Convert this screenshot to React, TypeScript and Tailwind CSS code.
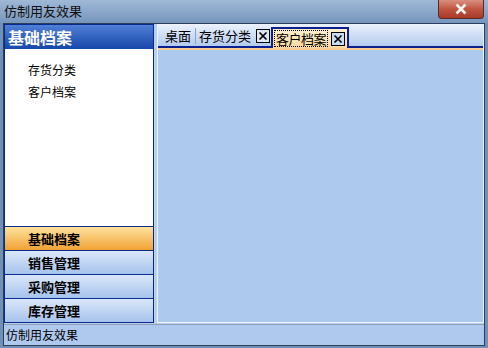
import React from "react";

const font = { fontFamily: '"Noto Sans CJK SC", "Liberation Sans", sans-serif' };

function CloseBox({ active }: { active?: boolean }) {
  return (
    <div className={`w-[14px] h-[14px] border border-black flex items-center justify-center ${active ? "bg-[#c9dcf5]" : "bg-[#dde8f7]"}`}>
      <svg width="10" height="10" viewBox="0 0 10 10">
        <path d="M1.5 1.5 L8.5 8.5 M8.5 1.5 L1.5 8.5" stroke="#000" strokeWidth="1.7" />
      </svg>
    </div>
  );
}

function NavButton({ label, active }: { label: string; active?: boolean }) {
  return (
    <div
      className={`h-[24px] flex items-center pl-[23px] border-t border-[#0a2a8c] text-[13px] font-bold text-black ${
        active
          ? "bg-gradient-to-b from-[#fde29a] to-[#f0a22e]"
          : "bg-gradient-to-b from-[#dbe7f9] to-[#a6c3ec]"
      }`}
    >
      {label}
    </div>
  );
}

export default function App() {
  return (
    <div className="w-[488px] h-[348px] flex flex-col bg-[#6f90b7] overflow-hidden" style={font}>
      {/* title bar */}
      <div className="h-[23px] flex items-start bg-gradient-to-b from-[#9fb8d6] to-[#7796bd] relative">
        <div className="pl-[4px] pt-[2px] text-[13px] leading-[18px] text-[#111]">仿制用友效果</div>
        <div className="absolute left-[438px] top-0 w-[46px] h-[19px] rounded-b-[4px] border border-[#5b2a26] border-t-0 bg-gradient-to-b from-[#d9907f] via-[#c0553f] to-[#a83a28] flex items-center justify-center">
          <svg width="14" height="12" viewBox="0 0 14 12">
            <path d="M2.5 1.5 L11.5 10.5 M11.5 1.5 L2.5 10.5" stroke="#f4f4f4" strokeWidth="2.6" />
          </svg>
        </div>
      </div>
      {/* body frame */}
      <div className="flex-1 flex flex-col mx-[3px] mb-[2px] border border-[#2c3f58] bg-[#b9cfee]">
        <div className="flex-1 flex">
          {/* left panel */}
          <div className="w-[150px] flex flex-col border border-[#0a2a8c] bg-white">
            <div className="h-[24px] bg-gradient-to-b from-[#4f7fd6] to-[#1747a9] text-white font-bold text-[16px] leading-[24px] pl-[3px]">
              基础档案
            </div>
            <div className="flex-1 flex flex-col pt-[10px] pl-[23px] text-[12px] leading-[22px] text-black">
              <div>存货分类</div>
              <div>客户档案</div>
            </div>
            <NavButton label="基础档案" active />
            <NavButton label="销售管理" />
            <NavButton label="采购管理" />
            <NavButton label="库存管理" />
          </div>
          {/* right panel */}
          <div className="flex-1 ml-[3px] flex flex-col border border-[#eef3fb] bg-[#adc9ee]">
            <div className="h-[23px] flex items-end bg-gradient-to-b from-[#e9f0fb] to-[#b3cbee] border-b-2 border-[#0c1f8f] pl-[3px]">
              <div className="h-[20px] flex items-center px-[4px] text-[13px] text-black">桌面</div>
              <div className="w-px h-[16px] mb-[2px] bg-[#8aa6cc]" />
              <div className="h-[20px] flex items-center pl-[3px] pr-[1px] gap-[5px] text-[13px] text-black">
                <span>存货分类</span>
                <CloseBox />
              </div>
              <div className="h-[21px] -mb-[2px] flex items-center gap-[3px] pl-[1px] pr-[2px] border-2 border-b-0 border-[#0c1f8f] bg-gradient-to-b from-[#fff0d2] to-[#fbd79e] text-[13px] text-black">
                <span className="border border-dotted border-black px-[1px] leading-[15px] tracking-[-0.5px]">客户档案</span>
                <CloseBox active />
              </div>
            </div>
            <div className="h-[2px] bg-[#f9ca92]" />
            <div className="flex-1" />
          </div>
        </div>
        {/* status bar */}
        <div className="h-[21px] mt-[1px] border-t border-[#8e9fb6] bg-[#afc9ee] text-[12px] leading-[20px] pl-[2px] text-black">
          仿制用友效果
        </div>
      </div>
    </div>
  );
}
